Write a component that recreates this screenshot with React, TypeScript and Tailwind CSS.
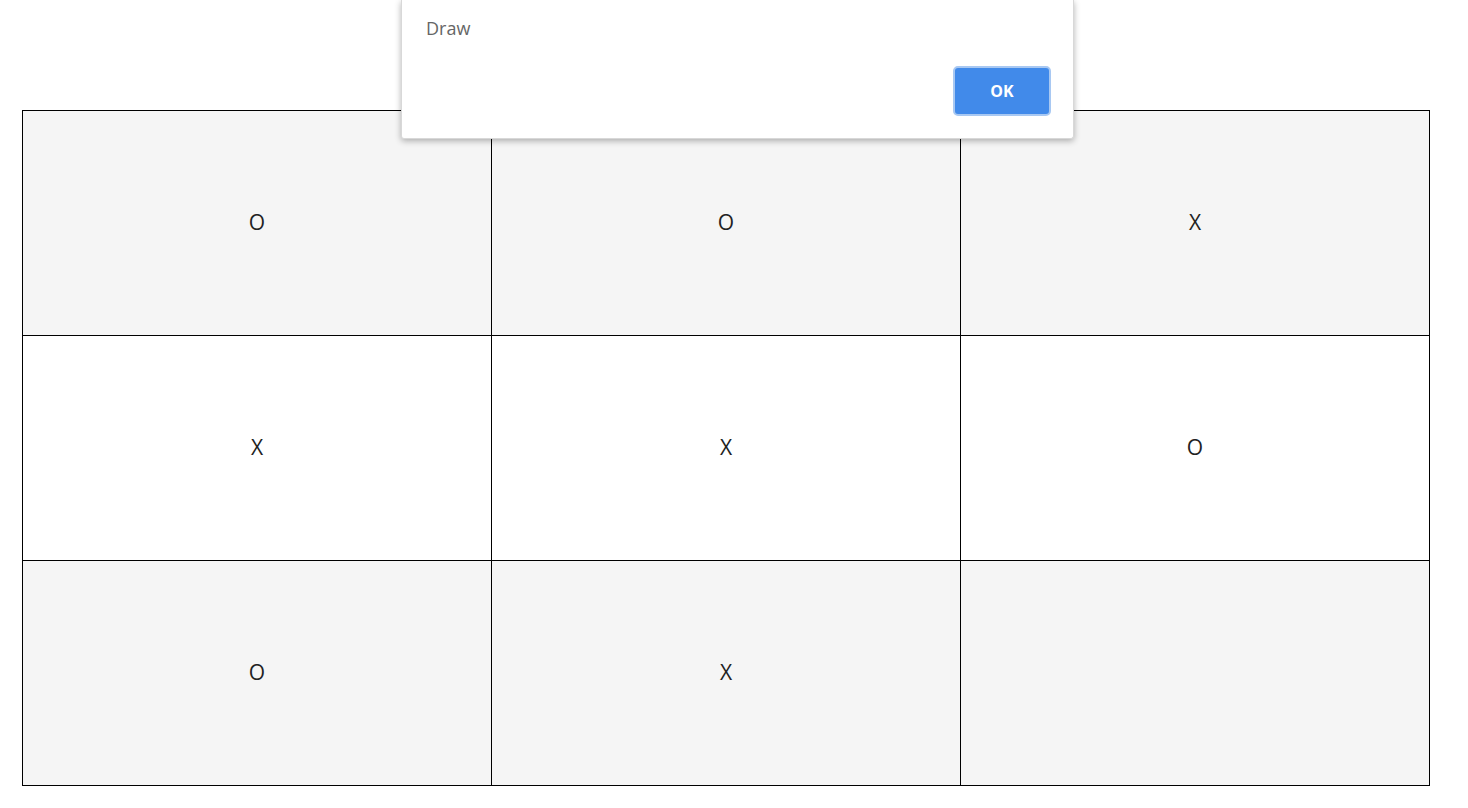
const board = ['O', 'O', 'X', 'X', 'X', 'O', 'O', 'X', ''];

export default function App() {
  return (
    <div className="relative min-h-screen bg-white font-['Open_Sans',sans-serif]">
      <div className="pt-[110px] pl-[22px]">
        <div className="grid w-[1408px] grid-cols-3 border-l border-t border-black">
          {board.map((value, i) => (
            <div
              key={i}
              className={`flex h-[225px] items-center justify-center border-b border-r border-black pb-px text-[21px] text-[#222] ${
                Math.floor(i / 3) === 1 ? 'bg-white' : 'bg-[#f5f5f5]'
              }`}
            >
              {value}
            </div>
          ))}
        </div>
      </div>
      <div className="absolute left-[401px] top-0 flex h-[139px] w-[673px] flex-col rounded-b-[3px] border-x border-b border-[#d8d8d8] bg-white shadow-[0_2px_6px_rgba(0,0,0,0.3)]">
        <p className="ml-[24px] mt-[15px] text-[18px] text-[#666]">Draw</p>
        <div className="mt-auto mb-[22px] mr-[22px] flex justify-end">
          <button className="h-[50px] w-[98px] rounded-[5px] border-2 border-[#a8c8f2] bg-[#418aea] text-[16px] font-bold text-white">
            OK
          </button>
        </div>
      </div>
    </div>
  );
}
